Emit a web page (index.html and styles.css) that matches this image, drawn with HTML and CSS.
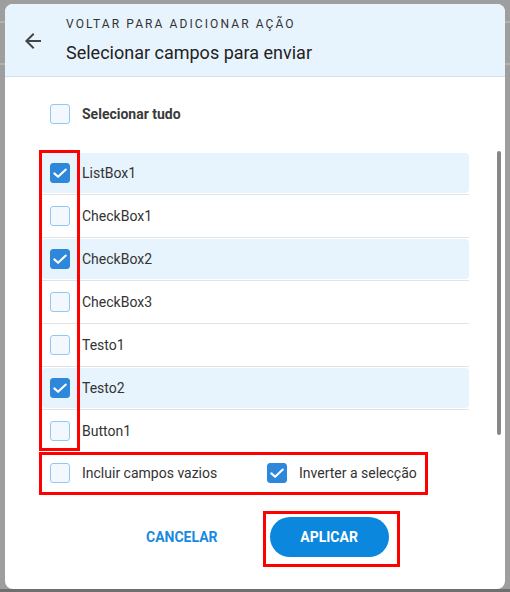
FILE: index.html
```html
<!DOCTYPE html>
<html lang="pt">
<head>
<meta charset="utf-8">
<title>Selecionar campos para enviar</title>
<link rel="stylesheet" href="styles.css">
</head>
<body>
<div class="dialog">
  <div class="header">
    <svg class="back" viewBox="0 0 24 24" width="24" height="24"><path d="M20 11H7.83l5.59-5.59L12 4l-8 8 8 8 1.41-1.41L7.83 13H20v-2z" fill="#444"/></svg>
    <div class="titles">
      <div class="overline">VOLTAR PARA ADICIONAR AÇÃO</div>
      <div class="title">Selecionar campos para enviar</div>
    </div>
  </div>
  <div class="content">
    <div class="select-all">
      <span class="cb"></span>
      <span class="select-all-label">Selecionar tudo</span>
    </div>
    <div class="list-wrap">
      <div class="list">
        <div class="item on"><div class="item-inner"><span class="cb checked"><svg viewBox="0 0 18 18"><path d="M3.3 9.4l3.8 3.4 7.7-7.3" /></svg></span><span>ListBox1</span></div></div>
        <div class="item"><div class="item-inner"><span class="cb"></span><span>CheckBox1</span></div></div>
        <div class="item on"><div class="item-inner"><span class="cb checked"><svg viewBox="0 0 18 18"><path d="M3.3 9.4l3.8 3.4 7.7-7.3" /></svg></span><span>CheckBox2</span></div></div>
        <div class="item"><div class="item-inner"><span class="cb"></span><span>CheckBox3</span></div></div>
        <div class="item"><div class="item-inner"><span class="cb"></span><span>Testo1</span></div></div>
        <div class="item on"><div class="item-inner"><span class="cb checked"><svg viewBox="0 0 18 18"><path d="M3.3 9.4l3.8 3.4 7.7-7.3" /></svg></span><span>Testo2</span></div></div>
        <div class="item"><div class="item-inner"><span class="cb"></span><span>Button1</span></div></div>
      </div>
      <div class="scrollbar"><div class="thumb"></div></div>
    </div>
    <div class="options">
      <div class="option first"><span class="cb"></span><span>Incluir campos vazios</span></div>
      <div class="option"><span class="cb checked"><svg viewBox="0 0 18 18"><path d="M3.3 9.4l3.8 3.4 7.7-7.3" /></svg></span><span>Inverter a selecção</span></div>
    </div>
    <div class="actions">
      <span class="btn-text">CANCELAR</span>
      <span class="btn-primary">APLICAR</span>
    </div>
  </div>
  <div class="mark mark-list"></div>
  <div class="mark mark-options"></div>
  <div class="mark mark-apply"></div>
</div>
</body>
</html>
```

FILE: styles.css
```css
* { box-sizing: border-box; }
html, body { margin: 0; padding: 0; }
body {
  width: 510px;
  height: 592px;
  overflow: hidden;
  font-family: Roboto, "Liberation Sans", Arial, sans-serif;
  color: #333;
  background:
    linear-gradient(to bottom, transparent 0 589px, #6f6f6f 589px),
    linear-gradient(to bottom, transparent 0 21px, #b2b2b2 21px 23px, transparent 23px 63px, #b2b2b2 63px 65px, transparent 65px),
    #9e9e9e;
  padding-top: 4px;
  padding-left: 5px;
}
.dialog {
  position: relative;
  width: 500px;
  height: 585px;
  background: #fff;
  border-radius: 8px;
  overflow: hidden;
}
.header {
  height: 73px;
  background: #e8f4fd;
  border-bottom: 1px solid #cfe0ee;
  display: flex;
  align-items: center;
  padding-left: 16px;
}
.back { display: block; margin-top: 1px; }
.titles { margin-left: 21px; padding-top: 1px; }
.overline {
  font-size: 12px;
  line-height: 16px;
  letter-spacing: 2.1px;
  color: #333;
}
.title {
  margin-top: 9px;
  font-size: 18px;
  line-height: 24px;
  color: #222;
}
.content { padding-left: 37px; }
.cb {
  width: 20px;
  height: 20px;
  flex: none;
  border-radius: 3px;
  border: 1px solid #90c9f5;
  background: #f2f8fd;
  display: inline-block;
}
.cb.checked {
  background: #2d87da;
  border-color: #2d87da;
}
.cb svg { display: block; width: 18px; height: 18px; }
.cb svg path { fill: none; stroke: #fff; stroke-width: 2.1; stroke-linecap: round; stroke-linejoin: round; }
.select-all {
  margin-top: 27px;
  height: 20px;
  padding-left: 8px;
  display: flex;
  align-items: center;
  gap: 12px;
}
.select-all-label {
  font-size: 14px;
  font-weight: 700;
  color: #3a3a3a;
}
.list-wrap {
  margin-top: 25px;
  height: 302px;
  display: flex;
}
.list {
  width: 427px;
  height: 302px;
  overflow: hidden;
  padding-top: 4px;
}
.item {
  padding-bottom: 1px;
  border-bottom: 1px solid #e3e3e3;
  margin-bottom: 1px;
}
.item-inner {
  height: 40px;
  display: flex;
  align-items: center;
  gap: 12px;
  padding-left: 8px;
  border-radius: 4px;
  font-size: 14px;
  color: #333;
}
.item.on .item-inner { background: #e8f4fd; }
.scrollbar { margin-left: 28px; width: 4px; }
.thumb {
  margin-top: 2px;
  height: 284px;
  border-radius: 2px;
  background: #878787;
}
.options {
  margin-top: 12px;
  padding-left: 8px;
  height: 20px;
  display: flex;
  align-items: center;
  font-size: 14px;
  color: #333;
}
.option { display: flex; align-items: center; gap: 12px; }
.option.first { width: 217px; }
.actions {
  margin-top: 34px;
  padding-left: 104px;
  display: flex;
  align-items: center;
  gap: 52px;
}
.btn-text {
  font-size: 14px;
  font-weight: 700;
  color: #1a8ae0;
}
.btn-primary {
  width: 119px;
  height: 40px;
  border-radius: 20px;
  background: #0b88de;
  color: #fff;
  font-size: 14px;
  font-weight: 700;
  display: flex;
  align-items: center;
  justify-content: center;
}
.mark {
  position: absolute;
  border: 3px solid #ff0000;
}
.mark-list { left: 34px; top: 146px; width: 41px; height: 301px; }
.mark-options { left: 34px; top: 448px; width: 389px; height: 43px; }
.mark-apply { left: 258px; top: 507px; width: 137px; height: 56px; }
```
